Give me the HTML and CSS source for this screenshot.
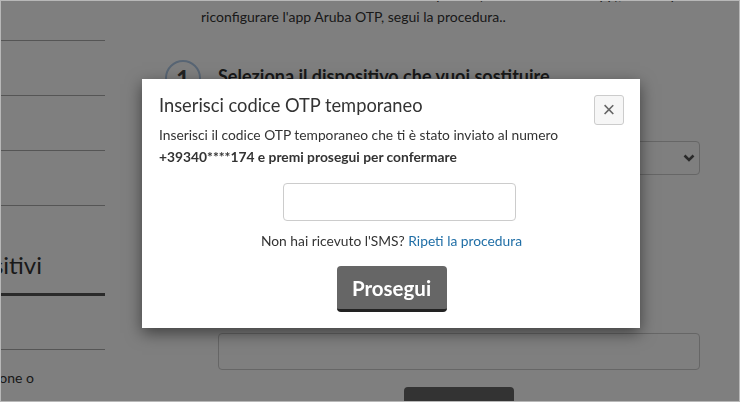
FILE: index.html
```html
<!DOCTYPE html>
<html lang="it">
<head>
    <meta charset="UTF-8">
    <meta name="viewport" content="width=device-width, initial-scale=1.0">
    <title>Aruba OTP - Sostituisci dispositivo</title>
    <link rel="stylesheet" href="styles.css">
</head>
<body>
    <div class="page">
        <aside class="sidebar">
            <ul class="side-nav">
                <li>Profilo</li>
                <li>Sicurezza</li>
                <li>Accessi</li>
                <li>Notifiche</li>
            </ul>
            <h2 class="side-title">I miei dispositivi</h2>
            <div class="side-item">Storico</div>
            <p class="side-note"><span>il tuo smartphone o</span></p>
        </aside>

        <main class="content">
            <p class="intro">Se hai cambiato o smarrito il tuo smartphone (o hai reinstallato l'app), e vuoi quindi<br>
                riconfigurare l'app Aruba OTP, segui la procedura..</p>

            <div class="step">
                <span class="step-num">1</span>
                <h3 class="step-title">Seleziona il dispositivo che vuoi sostituire</h3>
            </div>

            <div class="step-body">
                <div class="select">
                    <span>Samsung Galaxy S9</span>
                    <svg width="12" height="8" viewBox="0 0 12 8"><path d="M1.5 1.5 L6 6 L10.5 1.5" fill="none" stroke="#555" stroke-width="2.6"/></svg>
                </div>
                <input class="field" type="text">
                <div class="actions">
                    <button class="btn">Prosegui</button>
                </div>
            </div>
        </main>
    </div>

    <div class="backdrop"></div>

    <div class="modal" id="otp-modal">
        <div class="modal-header">
            <h4 class="modal-title">Inserisci codice OTP temporaneo</h4>
            <button class="close" type="button">&times;</button>
        </div>
        <p class="modal-text">Inserisci il codice OTP temporaneo che ti è stato inviato al numero<br>
            <strong>+39340****174 e premi prosegui per confermare</strong></p>
        <div class="otp-row">
            <input class="otp-input" type="text">
        </div>
        <p class="resend">Non hai ricevuto l'SMS? <a href="#">Ripeti la procedura</a></p>
        <div class="modal-actions">
            <button class="btn">Prosegui</button>
        </div>
    </div>

    <div class="frame"></div>
</body>
</html>
```

FILE: styles.css
```css
body {
    font-family: Lato, "Open Sans", Arial, sans-serif;
    margin: 0;
    padding: 0;
    height: 402px;
    overflow: hidden;
    background-color: #fff;
    color: #333;
}
.page {
    display: flex;
}
.sidebar {
    width: 250px;
    flex-shrink: 0;
    margin-left: -145px;
    margin-top: -14px;
}
.side-nav {
    list-style: none;
    margin: 0;
    padding: 0;
}
.side-nav li {
    height: 54px;
    line-height: 54px;
    border-bottom: 1px solid #aaa;
    font-size: 14px;
    padding-left: 10px;
}
.side-title {
    margin: 0;
    padding: 44px 63px 13px 0;
    font-size: 24px;
    font-weight: 400;
    line-height: 30px;
    text-align: right;
    border-bottom: 3px solid #555;
    white-space: nowrap;
}
.side-item {
    height: 53px;
    border-bottom: 1px solid #aaa;
    font-size: 14px;
    line-height: 53px;
    padding-left: 10px;
}
.side-note {
    margin: 18px 0 0;
    padding-right: 71px;
    font-size: 14px;
    line-height: 20px;
    text-align: right;
    white-space: nowrap;
}
.content {
    flex: 1;
    min-width: 0;
    margin-left: 60px;
    padding-right: 40px;
}
.intro {
    margin: -16px 0 0;
    padding-left: 36px;
    font-size: 14px;
    line-height: 22px;
    white-space: nowrap;
}
.step {
    display: flex;
    align-items: center;
    gap: 17px;
    margin-top: 32px;
}
.step-num {
    width: 32px;
    height: 32px;
    border: 2px solid #b0cbe8;
    border-radius: 50%;
    display: flex;
    align-items: center;
    justify-content: center;
    font-size: 24px;
    font-weight: 700;
    color: #444;
}
.step-title {
    margin: 0 0 4px;
    font-size: 18px;
    font-weight: 700;
}
.step-body {
    padding-left: 53px;
}
.select {
    margin-top: 45px;
    height: 34px;
    box-sizing: border-box;
    border: 1px solid #ccc;
    border-radius: 4px;
    display: flex;
    align-items: center;
    justify-content: space-between;
    padding: 0 4px 0 12px;
    font-size: 14px;
}
.field {
    display: block;
    width: 100%;
    height: 37px;
    margin-top: 158px;
    box-sizing: border-box;
    border: 1px solid #ccc;
    border-radius: 4px;
}
.actions {
    display: flex;
    justify-content: center;
    margin-top: 17px;
}
.btn {
    font-family: Lato, Arial, sans-serif;
    font-size: 20.5px;
    font-weight: 700;
    color: #fff;
    background-color: #666;
    border: none;
    border-bottom: 3px solid #222;
    border-radius: 4px;
    width: 110px;
    height: 46px;
    padding: 0;
    cursor: pointer;
}
.backdrop {
    position: fixed;
    inset: 0;
    background-color: rgba(0, 0, 0, 0.5);
}
.modal {
    position: absolute;
    left: 142px;
    top: 79px;
    width: 498px;
    height: 249px;
    box-sizing: border-box;
    padding: 14px 16px 16px 17px;
    background: #fff;
    box-shadow: 0 5px 15px rgba(0, 0, 0, 0.5);
}
.modal-header {
    display: flex;
    justify-content: space-between;
    align-items: flex-start;
}
.modal-title {
    margin: 0;
    font-size: 18.3px;
    font-weight: 400;
    line-height: 24px;
    color: #333;
}
.close {
    margin-top: 2px;
    margin-bottom: -8px;
    width: 30px;
    height: 30px;
    padding: 0;
    border: 1px solid #ccc;
    border-radius: 3px;
    background: #f6f6f6;
    color: #666;
    font-family: Arial, sans-serif;
    font-size: 22px;
    line-height: 26px;
}
.modal-text {
    margin: 7px 0 0;
    font-size: 13.8px;
    line-height: 22px;
    color: #333;
}
.otp-row {
    display: flex;
    justify-content: center;
    padding-left: 15px;
    margin-top: 15px;
}
.otp-input {
    width: 233px;
    height: 38px;
    box-sizing: border-box;
    border: 1px solid #ccc;
    border-radius: 4px;
}
.resend {
    margin: 10px 0 0;
    font-size: 13.8px;
    line-height: 20px;
    text-align: center;
}
.resend a {
    color: #1f6ea6;
    text-decoration: none;
}
.modal-actions {
    display: flex;
    justify-content: center;
    margin-top: 15px;
}
.frame {
    position: fixed;
    inset: 0;
    border: 1px solid #b8b8b8;
    pointer-events: none;
}
```
